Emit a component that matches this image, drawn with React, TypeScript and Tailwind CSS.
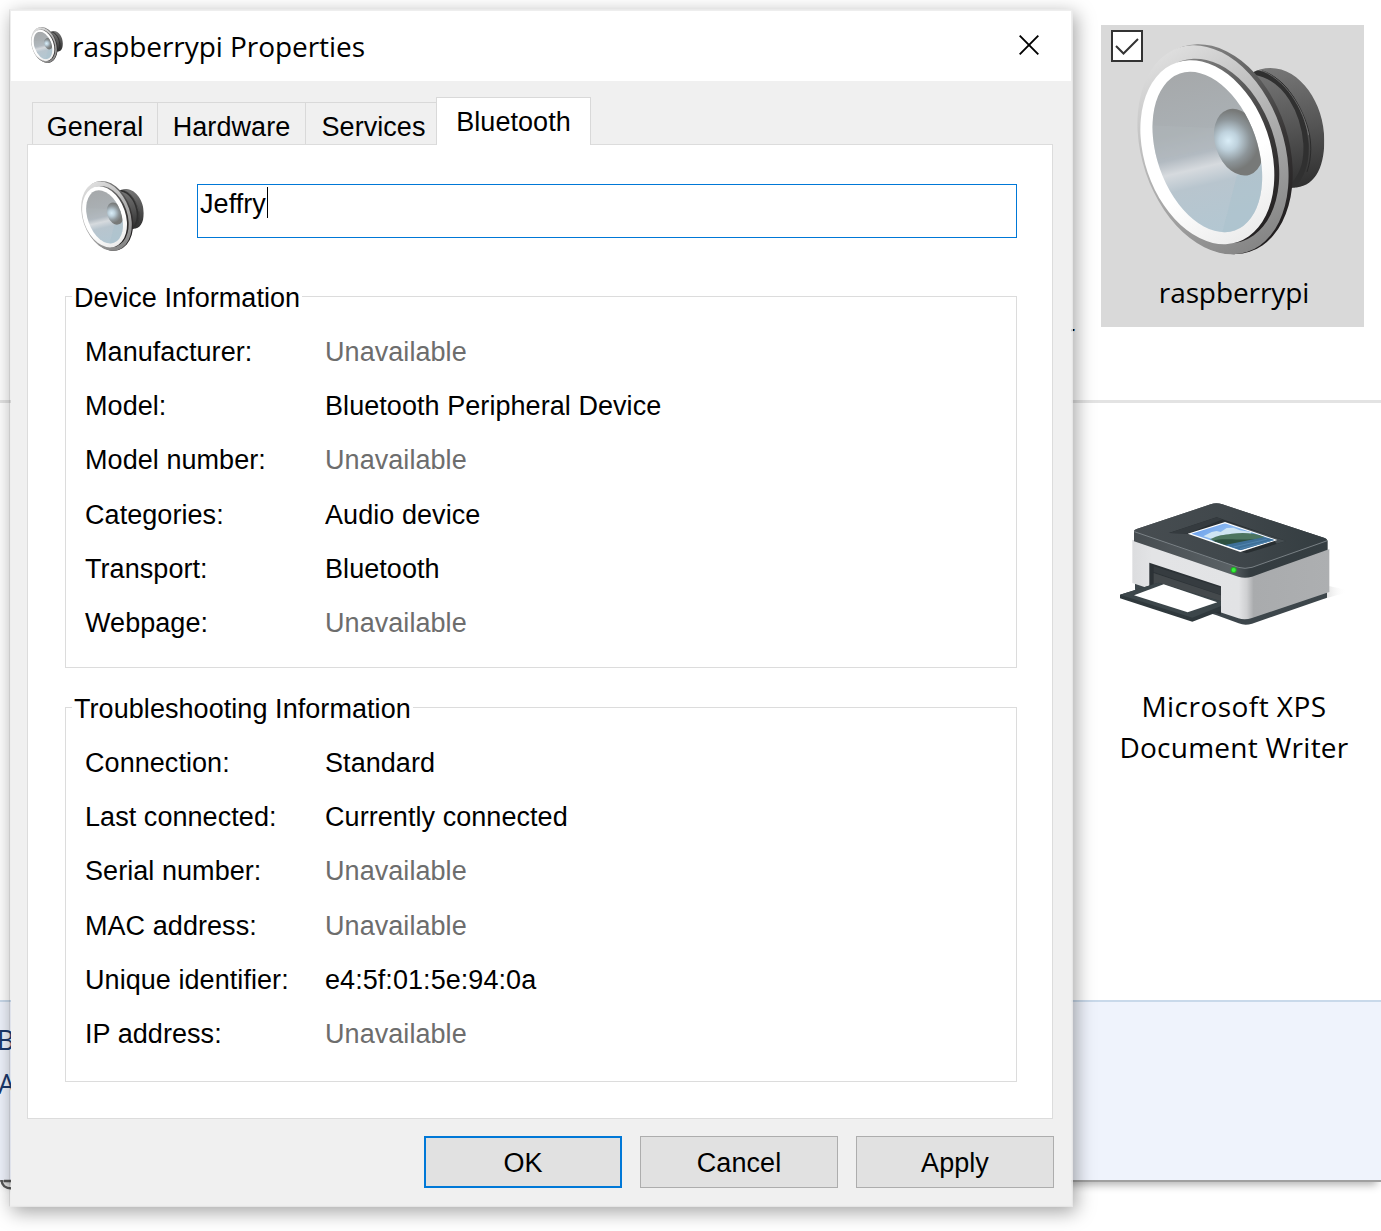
import React, { useId } from "react";

function Speaker({ className }: { className: string }) {
  const id = useId().replace(/[^a-zA-Z0-9]/g, "");
  const u = (n: string) => `url(#${id}${n})`;
  return (
    <svg className={className} viewBox="140 102 564 632" preserveAspectRatio="none" aria-hidden="true">
      <defs>
        <linearGradient id={`${id}back`} gradientUnits="userSpaceOnUse" x1="540" y1="174" x2="600" y2="532">
          <stop offset="0" stopColor="#777" />
          <stop offset="0.5" stopColor="#565656" />
          <stop offset="1" stopColor="#303030" />
        </linearGradient>
        <linearGradient id={`${id}dark`} gradientUnits="userSpaceOnUse" x1="330" y1="103" x2="520" y2="720">
          <stop offset="0" stopColor="#8d8d8d" />
          <stop offset="0.3" stopColor="#5f5f5f" />
          <stop offset="0.6" stopColor="#383636" />
          <stop offset="1" stopColor="#1f1c1d" />
        </linearGradient>
        <linearGradient id={`${id}rim`} gradientUnits="userSpaceOnUse" x1="300" y1="106" x2="440" y2="732">
          <stop offset="0" stopColor="#dedede" />
          <stop offset="0.45" stopColor="#b4b4b4" />
          <stop offset="0.8" stopColor="#969696" />
          <stop offset="1" stopColor="#858585" />
        </linearGradient>
        <linearGradient id={`${id}white`} gradientUnits="userSpaceOnUse" x1="340" y1="500" x2="390" y2="702">
          <stop offset="0" stopColor="#fff" />
          <stop offset="1" stopColor="#ececec" />
        </linearGradient>
        <linearGradient id={`${id}cone`} gradientUnits="userSpaceOnUse" x1="290" y1="190" x2="400" y2="660">
          <stop offset="0" stopColor="#a6a9ab" />
          <stop offset="0.35" stopColor="#aab0b4" />
          <stop offset="0.5" stopColor="#b2bac1" />
          <stop offset="0.59" stopColor="#d6dade" />
          <stop offset="0.7" stopColor="#b8c5ce" />
          <stop offset="1" stopColor="#b3c7d2" />
        </linearGradient>
        <radialGradient id={`${id}dome`} gradientUnits="userSpaceOnUse" cx="417" cy="382" r="92">
          <stop offset="0" stopColor="#d9edf7" />
          <stop offset="0.3" stopColor="#bfd2dd" />
          <stop offset="0.7" stopColor="#8d9599" />
          <stop offset="1" stopColor="#777978" />
        </radialGradient>
        <clipPath id={`${id}clip`}>
          <ellipse cx="351" cy="425.5" rx="151" ry="249" transform="rotate(-19.3 351 425.5)" />
        </clipPath>
        <clipPath id={`${id}bclip`}>
          <path d="M486 188Q510 174 540 174C630 174 702 280 702 390C702 480 668 532 608 532L560 540L480 300Z" />
        </clipPath>
      </defs>
      <g clipPath={u("bclip")} fill="none">
        <rect x="470" y="165" width="240" height="380" fill={u("back")} />
        <path d="M490 186C590 200 640 310 647 400C650 460 635 500 600 535" stroke="#303030" strokeWidth="16" />
        <path d="M515 182C590 205 650 310 660 390C664 430 658 460 650 485" stroke="#252525" strokeWidth="2.5" />
        <path d="M500 176C590 205 640 300 655 375" stroke="#858585" strokeWidth="2" />
      </g>
      <ellipse cx="378" cy="417" rx="217" ry="323" transform="rotate(-18 378 417)" fill={u("dark")} />
      <ellipse cx="368" cy="419" rx="213" ry="322.5" transform="rotate(-18.7 368 419)" fill={u("rim")} />
      <ellipse cx="364" cy="423" rx="191" ry="285" transform="rotate(-18.8 364 423)" fill={u("dark")} />
      <ellipse cx="351" cy="426" rx="189" ry="284" transform="rotate(-18.8 351 426)" fill={u("white")} />
      <g clipPath={u("clip")}>
        <rect x="180" y="180" width="340" height="490" fill={u("cone")} />
        <path d="M186 345L400 355L385 410L190 450Z" fill="#b2b8bd" opacity="0.3" />
        <path d="M440 495L395 670H530V450Z" fill="#a9c0cb" opacity="0.45" />
        <ellipse cx="445" cy="396" rx="70" ry="103" transform="rotate(-19 445 396)" fill={u("dome")} />
      </g>
    </svg>
  );
}

function Printer() {
  return (
    <svg className="mr-[2px] h-[124px] w-[227px]" viewBox="90 65 681 372" aria-hidden="true">
      <defs>
        <linearGradient id="lid" x1="0" y1="0" x2="1" y2="0">
          <stop offset="0" stopColor="#474d51" />
          <stop offset="0.5" stopColor="#40474b" />
          <stop offset="1" stopColor="#343d41" />
        </linearGradient>
        <linearGradient id="lidEdge" x1="0" y1="0" x2="1" y2="0">
          <stop offset="0" stopColor="#464c50" />
          <stop offset="0.5" stopColor="#5a6165" />
          <stop offset="0.6" stopColor="#343c40" />
          <stop offset="1" stopColor="#353e42" />
        </linearGradient>
        <linearGradient id="body" gradientUnits="userSpaceOnUse" x1="128" y1="0" x2="718" y2="0">
          <stop offset="0" stopColor="#dcdddf" />
          <stop offset="0.1" stopColor="#e3e4e6" />
          <stop offset="0.54" stopColor="#e2e3e5" />
          <stop offset="0.58" stopColor="#cfd0d2" />
          <stop offset="0.615" stopColor="#a9abad" />
          <stop offset="1" stopColor="#adafb1" />
        </linearGradient>
        <linearGradient id="sky" x1="0" y1="0" x2="1" y2="0.5">
          <stop offset="0" stopColor="#5b92e8" />
          <stop offset="0.5" stopColor="#8fbcf0" />
          <stop offset="1" stopColor="#4b83bd" />
        </linearGradient>
        <linearGradient id="cast" x1="0" y1="0" x2="1" y2="0">
          <stop offset="0" stopColor="#cfcfcf" />
          <stop offset="1" stopColor="#fff" stopOpacity="0" />
        </linearGradient>
        <clipPath id="photo">
          <path d="M405 129L553 179L451 210L304 160Z" />
        </clipPath>
      </defs>
      <path d="M690 312L770 328L768 337L700 356Z" fill="url(#cast)" />
      <path d="M135 305L450 405L711 335V352L486 430Q465 437 446 429L380 405L135 328Z" fill="#3d464b" />
      <path d="M127 178L460 270L718 207V335L486 413Q465 420 445 414L127 308Z" fill="url(#body)" />
      <path d="M178 247L393 318V403L178 330Z" fill="#2c3236" />
      <path d="M191 258L393 322V344L191 275Z" fill="#363c40" />
      <path d="M191 278L393 345V368L215 310L191 316Z" fill="#44494c" />
      <path d="M90 343L205 307L393 363V391L307 424L90 354Z" fill="#2f383c" />
      <path d="M90 343L205 307L393 363V377L307 412Z" fill="#3c464a" />
      <path d="M132 345L221 312L382 366L293 396Z" fill="#fff" />
      <path d="M132 153Q132 149 140 146L362 72Q379 66 397 72L704 173Q713 177 713 182V208L486 289Q465 295 445 289L132 183Z" fill="url(#lidEdge)" />
      <path d="M132 153Q132 149 140 146L362 72Q379 66 397 72L704 173Q716 177 704 182L486 261Q465 267 445 262L138 158Q132 156 132 153Z" fill="url(#lid)" />
      <path d="M133 154L445 261Q465 267 486 261L712 181" fill="none" stroke="#868d91" strokeWidth="2.5" />
      <path d="M237 158L380 111L588 182L470 219L451 213L304 160Z" fill="#282e31" />
      <path d="M237 158L380 111L398 117L296 159Z" fill="#353b3f" />
      <path d="M390 119L588 182L560 190L550 178Z" fill="#454d51" />
      <path d="M405 125L562 179L451 215L293 160Z" fill="#fff" />
      <g clipPath="url(#photo)">
        <path d="M290 120H570V220H290Z" fill="url(#sky)" />
        <path d="M340 168L365 155L380 152L392 155L410 143L430 142L450 150L485 155L470 180L380 180Z" fill="#cfe5f3" />
        <path d="M360 177C385 163 400 164 425 160C455 157 490 156 525 170L480 184L410 193Z" fill="#4c7560" />
        <path d="M366 181C410 171 440 184 530 172L450 193L405 196Z" fill="#2d5040" />
        <path d="M405 194L520 171L565 180L460 215Z" fill="#3e7099" />
        <path d="M430 200L530 177M450 205L550 180" stroke="#5c8fb8" strokeWidth="2" />
      </g>
      <circle cx="431" cy="269" r="9" fill="#1fb524" />
      <circle cx="431" cy="269" r="6" fill="#3cf03e" />
    </svg>
  );
}

type Row = [label: string, value: string];

const deviceRows: Row[] = [
  ["Manufacturer:", "Unavailable"],
  ["Model:", "Bluetooth Peripheral Device"],
  ["Model number:", "Unavailable"],
  ["Categories:", "Audio device"],
  ["Transport:", "Bluetooth"],
  ["Webpage:", "Unavailable"],
];

const troubleRows: Row[] = [
  ["Connection:", "Standard"],
  ["Last connected:", "Currently connected"],
  ["Serial number:", "Unavailable"],
  ["MAC address:", "Unavailable"],
  ["Unique identifier:", "e4:5f:01:5e:94:0a"],
  ["IP address:", "Unavailable"],
];

function Group({ title, rows, className }: { title: string; rows: Row[]; className: string }) {
  return (
    <section className={`relative ml-[37px] w-[952px] border border-[#dcdcdc] pt-7 pl-[19px] ${className}`}>
      <h2 className="absolute top-[-14px] left-[6px] bg-white pr-[2px] pl-[2px] leading-[30px] whitespace-nowrap">{title}</h2>
      {rows.map(([label, value]) => (
        <div key={label} className="flex h-[54.2px] items-center">
          <span className="w-[240px]">{label}</span>
          <span className={value === "Unavailable" ? "text-[#6d6d6d]" : ""}>{value}</span>
        </div>
      ))}
    </section>
  );
}

function Tab({ label, className }: { label: string; className: string }) {
  return (
    <div className={`flex h-[42px] items-center justify-center border-t border-l border-[#d9d9d9] pt-[7px] ${className}`}>
      {label}
    </div>
  );
}

function Button({ label, primary }: { label: string; primary?: boolean }) {
  return (
    <button
      className={`h-[52px] w-[198px] bg-[#e1e1e1] pt-[2px] ${primary ? "border-2 border-[#0078d7]" : "border border-[#adadad]"}`}
    >
      {label}
    </button>
  );
}

function Dialog() {
  return (
    <div className="absolute top-[9px] left-[9px] flex h-[1198px] w-[1064px] flex-col border-2 border-[#ececec]/85 border-l-black/[0.07] bg-[#f0f0f0] bg-clip-padding font-['Liberation_Sans',Arial,sans-serif] text-[27px] leading-[30px] tracking-[0.06px] text-black shadow-[3px_5px_18px_rgba(0,0,0,0.36)]">
      <header className="flex h-[70px] shrink-0 items-center bg-white pl-5">
        <Speaker className="mt-[-3px] h-[36px] w-[32px]" />
        <h1 className="ml-[9px] w-[900px] font-['Open_Sans','Noto_Sans',sans-serif] text-[28px] tracking-[-0.06px]">
          raspberrypi Properties
        </h1>
        <svg className="mt-[-2px] ml-[47px] h-[20px] w-[20px]" viewBox="0 0 20 20" aria-hidden="true">
          <path d="M0.7 0.7L19.3 19.3M19.3 0.7L0.7 19.3" stroke="#000" strokeWidth="1.9" />
        </svg>
      </header>
      <div className="flex flex-col pt-4 pl-4">
        <nav className="flex h-[47px] items-end pl-[5px]">
          <Tab label="General" className="w-[125px]" />
          <Tab label="Hardware" className="w-[148px]" />
          <Tab label="Services" className="w-[131px] pl-[5px]" />
          <div className="relative z-10 mb-[-1px] flex h-[48px] w-[155px] items-center justify-center border border-b-0 border-[#d9d9d9] bg-white">
            Bluetooth
          </div>
        </nav>
        <main className="h-[975px] w-[1026px] border border-[#dcdcdc] bg-white">
          <div className="flex h-[151px]">
            <Speaker className="mt-[36px] ml-[53px] h-[70px] w-[63px]" />
            <div className="mt-[39px] ml-[53px] flex h-[54px] w-[820px] border border-[#0078d7] pt-[4px] pl-[2px]">
              <span>Jeffry</span>
              <span className="mt-[-2px] ml-px h-[31px] w-px bg-black" />
            </div>
          </div>
          <Group title="Device Information" rows={deviceRows} className="h-[372px]" />
          <Group title="Troubleshooting Information" rows={troubleRows} className="mt-[39px] h-[375px]" />
        </main>
        <footer className="mt-[17px] flex gap-[18px] pl-[397px]">
          <Button label="OK" primary />
          <Button label="Cancel" />
          <Button label="Apply" />
        </footer>
      </div>
    </div>
  );
}

export default function App() {
  return (
    <div className="relative h-[1231px] w-[1381px] overflow-hidden bg-white font-['Open_Sans','Noto_Sans',sans-serif] text-[28px] text-black">
      <div className="flex h-[403px] items-start border-b-[3px] border-[#e3e3e3]">
        <span className="mt-[313px] w-[1075px] text-right leading-[40px]">r</span>
        <div className="relative mt-[25px] ml-[26px] flex h-[302px] w-[263px] flex-col items-center bg-[#d9d9d9]">
          <Speaker className="mt-[19px] mr-[3px] h-[211px] w-[188px]" />
          <span className="mt-[17px] ml-[3px] leading-[40px] tracking-[-0.1px]">raspberrypi</span>
          <span className="absolute top-[5px] left-[10px] flex h-8 w-8 items-center justify-center border-2 border-[#333] bg-white">
            <svg className="h-[17px] w-[24px]" viewBox="0 0 24 17" fill="none" aria-hidden="true">
              <path d="M1 8L8.500 15.500L23 1" stroke="#333" strokeWidth="2" />
            </svg>
          </span>
        </div>
      </div>
      <div className="flex h-[597px] justify-end">
        <div className="mr-[13px] flex w-[268px] flex-col items-center pt-[99px]">
          <Printer />
          <p className="mt-[60px] text-center leading-[41px] tracking-[0.25px]">
            <span className="tracking-[0.45px]">Microsoft XPS</span>
            <br />
            Document Writer
          </p>
        </div>
      </div>
      <div className="h-[182px] border-t-2 border-b-2 border-t-[#c9d9ea] border-b-[#a0a0a0] bg-[#eff3fc] pt-[16px] text-[27px] leading-[44px] text-[#1a386b] shadow-[0_7px_8px_-4px_rgba(0,0,0,0.3)]">
        <div className="ml-[-3px]">B</div>
        <div className="ml-[-2px]">A</div>
      </div>
      <svg className="absolute top-[1179px] left-0 h-[12px] w-[12px]" viewBox="0 0 12 12" fill="none" aria-hidden="true">
        <path d="M1.500 1C2 7 5 9.500 12 9.500M4 2H12" stroke="#555" strokeWidth="2.500" />
      </svg>
      <Dialog />
    </div>
  );
}
